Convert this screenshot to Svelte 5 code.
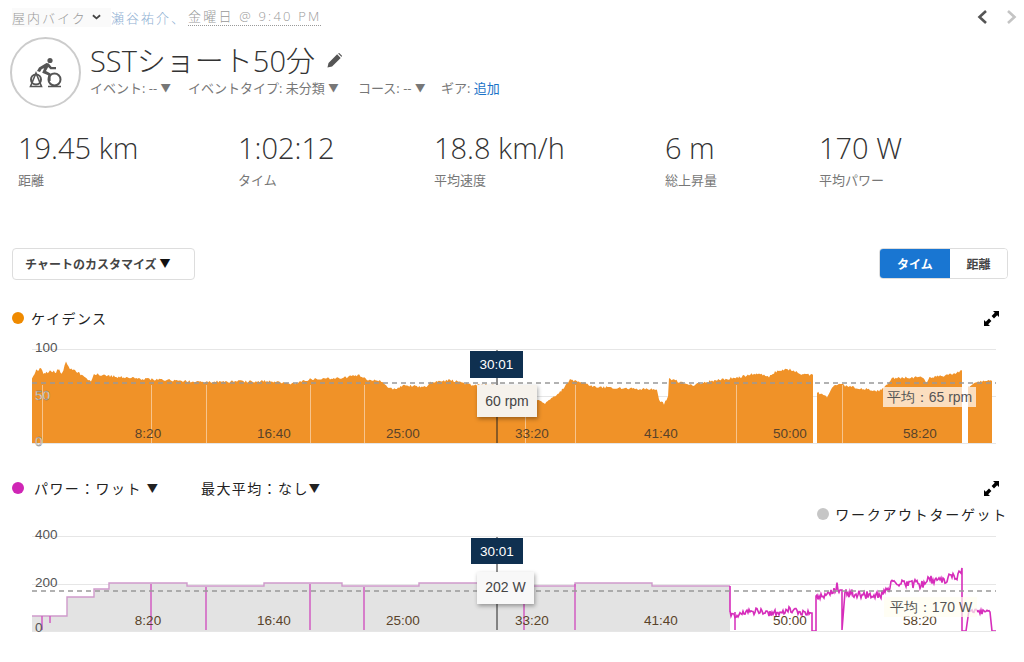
<script lang="ts">
  // Small seeded generator so the chart noise stays the same on each render.
  function noise(seed: number) {
    let s = seed;
    return () => {
      s = (s * 16807) % 2147483647;
      return (s & 0xffff) / 0xffff - 0.5;
    };
  }

  function trace(keys: number[][], amp: number, seed: number, step = 1.25): number[][] {
    const rnd = noise(seed);
    const out: number[][] = [];
    for (let i = 0; i < keys.length - 1; i++) {
      const [x0, y0] = keys[i];
      const [x1, y1] = keys[i + 1];
      for (let x = x0; x < x1; x += step) {
        const t = (x - x0) / (x1 - x0);
        out.push([x, y0 + (y1 - y0) * t + rnd() * amp]);
      }
    }
    const last = keys[keys.length - 1];
    out.push([last[0], last[1]]);
    return out;
  }

  const toPath = (pts: number[][]) =>
    pts.map((p, i) => `${i ? "L" : "M"}${p[0].toFixed(1)} ${p[1].toFixed(1)}`).join("");

  const base = 443;
  const cadA = trace([[32,378],[36,370],[41,369],[44,374],[50,371],[56,372],[58,369],[62,373],[66,362],[70,369],[78,372],[88,380],[91,382],[94,374],[110,376],[143,379],[207,382],[267,381],[295,384],[310,379],[343,378],[358,375],[367,380],[380,381],[393,390],[403,385],[427,387],[430,382],[450,380],[473,385],[500,386],[530,398],[545,403],[562,390],[570,379],[595,387],[645,389],[657,390],[659,400],[664,404],[668,397],[669,379],[692,385],[712,381],[739,377],[759,373],[769,377],[775,372],[790,369],[802,374],[813,375]], 2.5, 77);
  const cadB = trace([[817,392],[827,397],[834,385],[840,383],[845,386],[879,391],[884,388],[892,378],[922,377],[927,383],[930,377],[949,375],[962,371]], 2.5, 31);
  const cadC = trace([[968,387],[977,382],[990,380],[992,381]], 1.5, 13);

  const area = (pts: number[][]) =>
    `${toPath(pts)}L${pts[pts.length - 1][0]} ${base}L${pts[0][0]} ${base}Z`;

  const cadenceAreas = [cadA, cadB, cadC].map(area);
  const cadenceTicks = [42, 151, 206, 310, 364, 525, 575, 736, 842];

  const target = "M32 631V616H67V597H94V589H109V583H187V586H264V583H342V586H419V583H497V586H575V583H652V586H730V631Z";
  const targetLine = "M32 616H67V597H94V589H109V583H187V586H264V583H342V586H419V583H497V586H575V583H652V586H730";
  const spikes = [[42,616,630],[50,616,623],[151,584,630],[206,587,630],[310,584,630],[364,587,630],[524,587,630],[575,584,630]];

  const powerA = trace([[730,612],[734,616],[745,613],[760,611],[772,613],[789,610],[800,612],[812,613]], 7, 91, 1);
  const powerB = trace([[817,596],[827,597],[832,592],[837,586],[840,590]], 8, 17, 1);
  const powerC = trace([[845,592],[860,595],[879,595],[888,592],[891,581],[922,585],[929,580],[945,579],[958,575],[962,568]], 9, 53, 1);
  const powerD = trace([[969,610],[980,612],[990,612]], 5, 29, 1);
  const powerLine =
    "M730 586V612" + toPath(powerA).replace("M", "L") + "V631H816V596" + toPath(powerB).replace("M", "L") +
    "L842 590V630L845 592" + toPath(powerC).replace("M", "L") + "V631H966L969 610" + toPath(powerD).replace("M", "L") + "L992 631H996";

  const timeLabels = [["8:20", 148], ["16:40", 274], ["25:00", 403], ["33:20", 532], ["41:40", 661], ["50:00", 790], ["58:20", 920]];

  const stats = [
    { value: "19.45 km", label: "距離", width: 220 },
    { value: "1:02:12", label: "タイム", width: 196 },
    { value: "18.8 km/h", label: "平均速度", width: 231 },
    { value: "6 m", label: "総上昇量", width: 154 },
    { value: "170 W", label: "平均パワー", width: 180 },
  ];
</script>

{#snippet expand()}
  <svg class="expand" viewBox="0 0 15 15" width="15" height="15">
    <path d="M15 0H9L10.8 1.8 7.6 5 10 7.4 13.2 4.2 15 6Z" fill="#000" />
    <path d="M0 15H6L4.2 13.2 7.4 10 5 7.6 1.8 10.8 0 9Z" fill="#000" />
  </svg>
{/snippet}

<div class="page">
  <div class="crumbs">
    <span class="type">屋内バイク
      <svg viewBox="0 0 10 6" width="9" height="6"><path d="M1 1l4 3.5L9 1" fill="none" stroke="#444" stroke-width="2" /></svg>
    </span>
    <span class="owner">瀬谷祐介、</span>
    <span class="when">金曜日 @ 9:40 PM</span>
    <span class="nav">
      <svg viewBox="0 0 12 16" width="12" height="16"><path d="M10 2L3.5 8l6.5 6" fill="none" stroke="#555" stroke-width="2.6" /></svg>
      <svg viewBox="0 0 12 16" width="12" height="16"><path d="M2 2l6.5 6L2 14" fill="none" stroke="#c4c4c4" stroke-width="2.6" /></svg>
    </span>
  </div>

  <div class="head">
    <div class="badge">
      <svg viewBox="0 0 36 32" width="36" height="32">
        <circle cx="22" cy="3.5" r="2.6" fill="#555" />
        <path d="M18.5 6L11 10.5l-2 3.5 3 1 1.8-3 2.4-.8-2 4.6 6 2.4v5.8h2.4v-7.4L18 14l2.2-4 2.2 2.2H28V10h-4.4L20.8 6.6Z" fill="#555" />
        <circle cx="8" cy="22.5" r="5" fill="none" stroke="#555" stroke-width="2" />
        <circle cx="26.5" cy="22.5" r="6" fill="none" stroke="#555" stroke-width="2" />
        <path d="M8 16L2.5 29.5h11ZM20 29.5h13" fill="none" stroke="#555" stroke-width="1.6" />
      </svg>
    </div>
    <div class="head-text">
      <div class="title">
        <h1>SSTショート50分</h1>
        <svg viewBox="0 0 16 16" width="15" height="15">
          <path d="M0.5 15.5L1.6 10.6 10.8 1.4 14.6 5.2 5.4 14.4ZM11.8.5L13 -.0 16 3 15.5 4.2Z" fill="#555" />
        </svg>
      </div>
      <div class="meta">
        <span>イベント: -- <i>▼</i></span>
        <span>イベントタイプ: 未分類 <i>▼</i></span>
        <span>コース: -- <i>▼</i></span>
        <span>ギア: <a href="#add">追加</a></span>
      </div>
    </div>
  </div>

  <div class="stats">
    {#each stats as s}
      <div class="stat" style="width: {s.width}px">
        <div class="value">{s.value}</div>
        <div class="label">{s.label}</div>
      </div>
    {/each}
  </div>

  <div class="toolbar">
    <button class="customize">チャートのカスタマイズ<i>▼</i></button>
    <div class="toggle">
      <button class="on">タイム</button>
      <button>距離</button>
    </div>
  </div>

  <div class="chart-head cadence">
    <span class="dot orange"></span>
    <span class="name">ケイデンス</span>
    {@render expand()}
  </div>

  <svg class="chart first" viewBox="0 340 1024 110" height="110">
    <line x1="32" x2="996" y1="349.5" y2="349.5" class="grid" />
    <line x1="32" x2="996" y1="396.5" y2="396.5" class="grid" />
    {#each cadenceAreas as d}
      <path {d} fill="#f09228" />
    {/each}
    {#each cadenceTicks as x}
      <line x1={x + 0.5} x2={x + 0.5} y1="385" y2={base} stroke="#f7c48c" stroke-width="1" />
    {/each}
    <line x1="32" x2="996" y1="443.5" y2="443.5" class="grid" />
    <line x1="32" x2="996" y1="383" y2="383" class="avg" />
    <text x="35" y="351.5" class="axis">100</text>
    <text x="35" y="399.5" class="axis light">50</text>
    <text x="35" y="445.5" class="axis light">0</text>
    {#each timeLabels as [t, x]}
      <text x={x} y="438" class="axis tick">{t}</text>
    {/each}
    <line x1="497" x2="497" y1="350" y2="443" stroke="#222" />
    <rect x="883" y="387" width="93" height="20" fill="#fff" opacity="0.7" />
    <text x="929.5" y="402" class="axis mid">平均：65 rpm</text>
    <rect x="470" y="351" width="53" height="27" fill="#0f3050" />
    <text x="496.5" y="369" class="tip-dark">30:01</text>
    <rect x="477" y="385" width="60" height="32" fill="#f6f2ec" class="shadow" />
    <text x="507" y="405.5" class="tip">60 rpm</text>
  </svg>

  <div class="chart-head power">
    <span class="dot pink"></span>
    <span class="name">パワー：ワット <i>▼</i></span>
    <span class="name peak">最大平均：なし<i>▼</i></span>
    {@render expand()}
  </div>
  <div class="legend">
    <span class="dot grey"></span>
    <span class="name">ワークアウトターゲット</span>
  </div>

  <svg class="chart second" viewBox="0 525 1024 110" height="110">
    <line x1="32" x2="996" y1="536.5" y2="536.5" class="grid" />
    <line x1="32" x2="996" y1="584.5" y2="584.5" class="grid" />
    <path d={target} fill="#e3e3e3" />
    <path d={targetLine} fill="none" stroke="#cf9acb" stroke-width="1.4" />
    {#each spikes as [x, y0, y1]}
      <line x1={x} x2={x} y1={y0} y2={y1} stroke="#d25cc2" stroke-width="1.5" />
    {/each}
    <line x1="735" x2="735" y1="612" y2="630" stroke="#d62dbb" stroke-width="1.5" />
    <path d={powerLine} fill="none" stroke="#d62dbb" stroke-width="1.6" />
    <line x1="32" x2="996" y1="631.5" y2="631.5" class="grid" />
    <line x1="32" x2="996" y1="591" y2="591" class="avg" />
    <text x="35" y="539" class="axis">400</text>
    <text x="35" y="587" class="axis">200</text>
    <text x="35" y="632" class="axis">0</text>
    {#each timeLabels as [t, x]}
      <text x={x} y="625" class="axis tick">{t}</text>
    {/each}
    <line x1="497" x2="497" y1="537" y2="630" stroke="#222" />
    <rect x="884" y="597" width="93" height="20" fill="#fffef0" opacity="0.7" />
    <text x="931" y="612" class="axis mid">平均：170 W</text>
    <rect x="471" y="538" width="52" height="26" fill="#0f3050" />
    <text x="497" y="556" class="tip-dark">30:01</text>
    <rect x="477" y="572" width="57" height="32" fill="#f8f8f8" class="shadow" />
    <text x="505.5" y="592" class="tip">202 W</text>
  </svg>
</div>

<style>
  :global(body) {
    background: #fff;
  }

  .page {
    width: 1024px;
    height: 662px;
    overflow: hidden;
    font-family: "Open Sans", "Noto Sans CJK JP", sans-serif;
    color: #333;
  }

  i {
    font-style: normal;
    font-size: 0.8em;
    vertical-align: 1px;
  }

  .crumbs {
    display: flex;
    align-items: center;
    height: 20px;
    padding: 7px 0 1px 12px;
    font-size: 13px;
    letter-spacing: 2px;
    font-weight: 300;
    color: #999;
  }

  .type {
    display: flex;
    align-items: center;
    gap: 5px;
    width: 99px;
    height: 19px;
    background: #fafafa;
    flex-shrink: 0;
  }

  .owner {
    color: #8fb0d3;
    width: 77px;
  }

  .when {
    border-bottom: 1px dotted #999;
    line-height: 17px;
    letter-spacing: 2.2px;
  }

  .nav {
    margin-left: auto;
    display: flex;
    gap: 18px;
    padding-right: 6px;
  }

  .head {
    display: flex;
    gap: 8px;
    margin: 9px 0 0 10px;
  }

  .badge {
    width: 67px;
    height: 67px;
    border: 2px solid #ccc;
    border-radius: 50%;
    display: flex;
    align-items: center;
    justify-content: center;
    flex-shrink: 0;
  }

  .head-text {
    padding-top: 5px;
    margin-left: 1px;
  }

  .title {
    display: flex;
    align-items: center;
    gap: 12px;
    height: 37px;
  }

  h1 {
    margin: 0;
    font-size: 29px;
    font-weight: 300;
    line-height: 37px;
    color: #333;
  }

  .meta {
    display: flex;
    font-size: 13px;
    color: #777;
    line-height: 16px;
    margin-top: 1px;
  }

  .meta span:nth-child(1) { width: 98px; }
  .meta span:nth-child(2) { width: 170px; }
  .meta span:nth-child(3) { width: 83px; }

  .meta a {
    color: #1a73c8;
    text-decoration: none;
  }

  .stats {
    display: flex;
    margin: 21px 0 0 18px;
  }

  .value {
    font-size: 29px;
    font-weight: 300;
    line-height: 38px;
    color: #333;
  }

  .label {
    font-size: 13px;
    color: #777;
    line-height: 18px;
    margin-top: 4px;
  }

  .toolbar {
    display: flex;
    justify-content: space-between;
    margin: 59px 16px 0 12px;
  }

  button {
    font: inherit;
    font-size: 12px;
    font-weight: 700;
    color: #444;
    background: #fff;
    padding: 0;
  }

  .customize {
    width: 183px;
    height: 32px;
    border: 1px solid #ddd;
    border-radius: 4px;
    text-align: left;
    padding-left: 12px;
  }

  .customize i {
    color: #111;
    margin-left: 3px;
    font-size: 11px;
  }

  .toggle {
    display: flex;
    width: 129px;
    height: 31px;
    border: 1px solid #ddd;
    border-radius: 4px;
    overflow: hidden;
    box-sizing: border-box;
  }

  .toggle button {
    flex: 1;
    border: 0;
  }

  .toggle .on {
    flex: none;
    width: 70px;
    background: #1976d2;
    color: #fff;
  }

  .chart-head {
    display: flex;
    align-items: center;
    padding: 0 25px 0 12px;
    height: 20px;
  }

  .cadence {
    margin-top: 28px;
  }

  .power {
    margin-top: 28px;
  }

  .dot {
    width: 12px;
    height: 12px;
    border-radius: 50%;
    flex-shrink: 0;
  }

  .orange { background: #ef8a00; }
  .pink { background: #cf26b5; }
  .grey { background: #c6c6c6; }

  .name {
    font-size: 14px;
    letter-spacing: 1.4px;
    color: #222;
    margin-left: 7px;
  }

  .power .name:nth-child(2) {
    width: 167px;
    margin-left: 10px;
  }

  .peak {
    margin-left: 0;
  }

  .expand {
    margin-left: auto;
  }

  .legend {
    display: flex;
    align-items: center;
    justify-content: flex-end;
    height: 20px;
    padding-right: 16px;
    margin-top: 6px;
  }

  .legend .name {
    letter-spacing: 1.7px;
    margin-left: 6px;
  }

  .chart {
    display: block;
    width: 1024px;
  }

  .first {
    margin-top: 12px;
  }

  .second {
    margin-top: 1px;
  }

  .grid {
    stroke: #e6e6e6;
    stroke-width: 1;
  }

  .avg {
    stroke: #999;
    stroke-width: 1.4;
    stroke-dasharray: 5 4;
  }

  .axis {
    font-family: "Liberation Sans", sans-serif;
    font-size: 13.5px;
    fill: #555;
  }

  .axis.light {
    fill: #f4ece2;
    stroke: #666;
    stroke-width: 0.3px;
  }

  .tick {
    text-anchor: middle;
    fill: #59432a;
  }

  .mid {
    text-anchor: middle;
    font-size: 14px;
  }

  .tip-dark {
    font-family: "Liberation Sans", sans-serif;
    font-size: 13.5px;
    fill: #fff;
    text-anchor: middle;
  }

  .tip {
    font-family: "Liberation Sans", sans-serif;
    font-size: 14px;
    fill: #444;
    text-anchor: middle;
  }

  .shadow {
    filter: drop-shadow(1px 2px 2px rgba(0, 0, 0, 0.35));
  }
</style>
